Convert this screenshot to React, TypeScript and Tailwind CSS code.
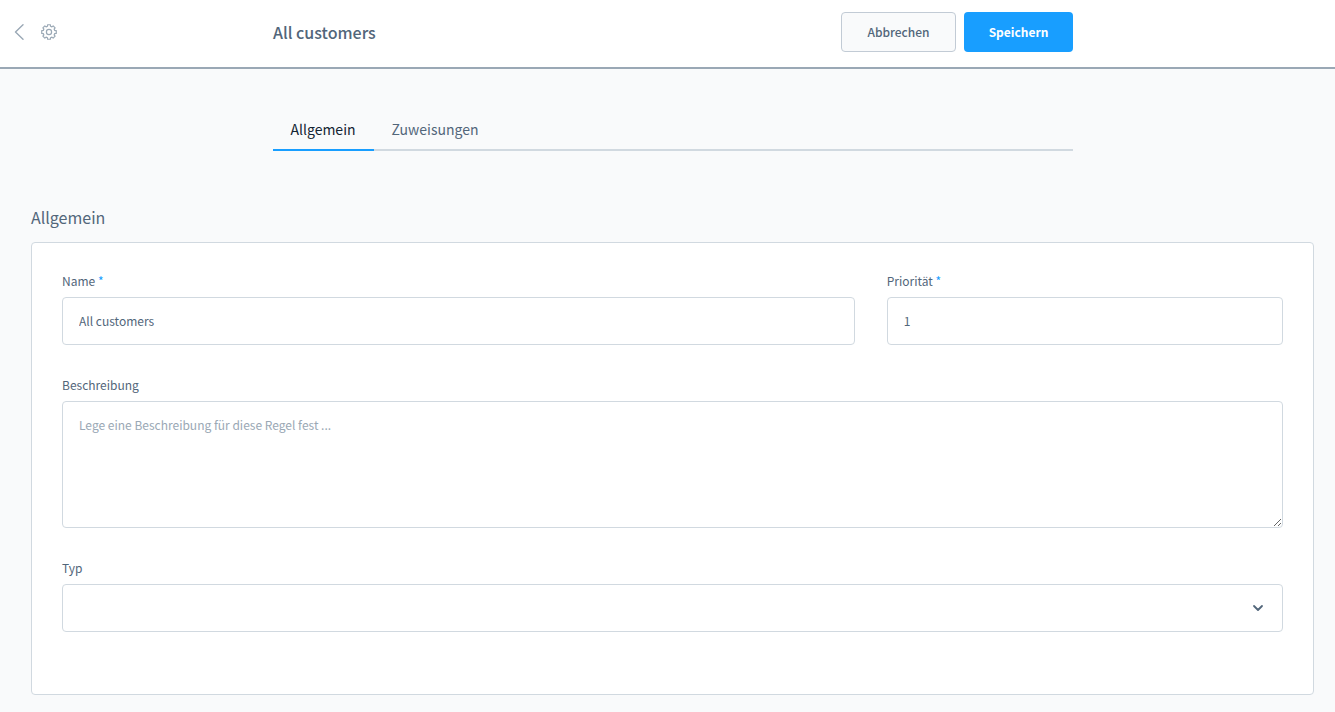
import { useState } from "react"
import type React from "react"

const field =
  "block w-full rounded border border-[#d1d9e0] bg-white px-4 text-[#52667a] outline-none focus:border-[#189eff]"

function Label({
  htmlFor,
  text,
  required = false,
}: {
  htmlFor: string
  text: string
  required?: boolean
}): React.JSX.Element {
  return (
    <label htmlFor={htmlFor} className="mb-2 block leading-4">
      {text}
      {required && <span className="text-[#189eff]"> *</span>}
    </label>
  )
}

function Header(): React.JSX.Element {
  return (
    <header className="grid grid-cols-[1fr_800px_1fr] items-center border-b-2 border-[#9aa8b5] bg-white pt-3 pb-[15px] pl-[11px]">
      <div className="flex items-center gap-3.5">
        <button type="button" aria-label="Zurück" className="text-[#9aa8b5]">
          <svg
            width="16"
            height="16"
            viewBox="0 0 16 16"
            fill="none"
            stroke="currentColor"
            strokeWidth="1.4"
            strokeLinecap="round"
            strokeLinejoin="round"
          >
            <path d="M12 0.8 4.5 8 12 15.2" />
          </svg>
        </button>
        <a href="#settings" aria-label="Einstellungen" className="text-[#9aa8b5]">
          <Gear />
        </a>
      </div>
      <div className="flex items-center justify-between">
        <h1 className="text-base font-medium">All customers</h1>
        <div className="flex gap-2">
          <button
            type="button"
            className="h-10 w-[115px] rounded border border-[#c2cbd5] bg-[#f9fafb] font-medium"
          >
            Abbrechen
          </button>
          <button
            type="button"
            className="h-10 w-[109px] rounded bg-[#189eff] font-bold text-white"
          >
            Speichern
          </button>
        </div>
      </div>
    </header>
  )
}

// eight teeth, each with two corners at its foot and two at its tip
const gearPoints = [0, 45, 90, 135, 180, 225, 270, 315]
  .flatMap((tooth) => [
    [tooth - 15, 5.9],
    [tooth - 11, 7.4],
    [tooth + 11, 7.4],
    [tooth + 15, 5.9],
  ])
  .map(([angle, radius]) => {
    const rad = (angle * Math.PI) / 180
    const x = 8 + radius * Math.cos(rad)
    const y = 8 + radius * Math.sin(rad)
    return `${x.toFixed(2)},${y.toFixed(2)}`
  })
  .join(" ")

function Gear(): React.JSX.Element {
  return (
    <svg
      width="16"
      height="16"
      viewBox="0 0 16 16"
      fill="none"
      stroke="currentColor"
      strokeWidth="1.2"
      strokeLinejoin="round"
    >
      <polygon points={gearPoints} />
      <circle cx="8" cy="8" r="2.6" />
    </svg>
  )
}

function Tabs(): React.JSX.Element {
  return (
    <nav className="mx-auto flex w-full max-w-[800px] border-b-2 border-[#d1d9e0] text-sm">
      <a
        href="#allgemein"
        aria-current="page"
        className="-mb-0.5 border-b-2 border-[#189eff] px-[18px] pt-2 pb-2.5 leading-5 text-[#142433]"
      >
        Allgemein
      </a>
      <a href="#zuweisungen" className="px-[18px] pt-2 pb-2.5 leading-5">
        Zuweisungen
      </a>
    </nav>
  )
}

export default function App(): React.JSX.Element {
  const [name, setName] = useState("All customers")
  const [priority, setPriority] = useState("1")

  return (
    <div className="min-h-screen bg-[#f9fafb] font-['Noto_Sans_CJK_SC',sans-serif] text-xs text-[#52667a]">
      <Header />
      <main className="pt-[42px] pr-[21px] pb-4 pl-[31px]">
        <Tabs />
        <h2 className="mt-[54px] mb-[13px] text-base leading-6">Allgemein</h2>
        <form className="grid gap-8 rounded border border-[#d1d9e0] bg-white px-[30px] pt-[30px] pb-[62px] sm:grid-cols-[2fr_1fr]">
          <div>
            <Label htmlFor="name" text="Name" required />
            <input
              id="name"
              required
              value={name}
              onChange={(e) => setName(e.target.value)}
              className={`${field} h-12 pb-0.5`}
            />
          </div>
          <div>
            <Label htmlFor="priority" text="Priorität" required />
            <input
              id="priority"
              required
              inputMode="numeric"
              value={priority}
              onChange={(e) => setPriority(e.target.value)}
              className={`${field} h-12 pb-0.5`}
            />
          </div>
          <div className="sm:col-span-2">
            <Label htmlFor="description" text="Beschreibung" />
            <textarea
              id="description"
              placeholder="Lege eine Beschreibung für diese Regel fest ..."
              className={`${field} h-[127px] resize-y py-[11px] leading-6 placeholder:text-[#9aa8b5]`}
            />
          </div>
          <div className="sm:col-span-2">
            <Label htmlFor="type" text="Typ" />
            <div className="relative">
              <select id="type" className={`${field} h-12 appearance-none`}>
                <option value=""></option>
              </select>
              <svg
                className="pointer-events-none absolute top-[18px] right-[19px]"
                width="12"
                height="12"
                viewBox="0 0 12 12"
                fill="none"
                stroke="#52667a"
                strokeWidth="1.8"
                strokeLinecap="round"
                strokeLinejoin="round"
              >
                <path d="M2 4l4 4 4-4" />
              </svg>
            </div>
          </div>
        </form>
      </main>
    </div>
  )
}
